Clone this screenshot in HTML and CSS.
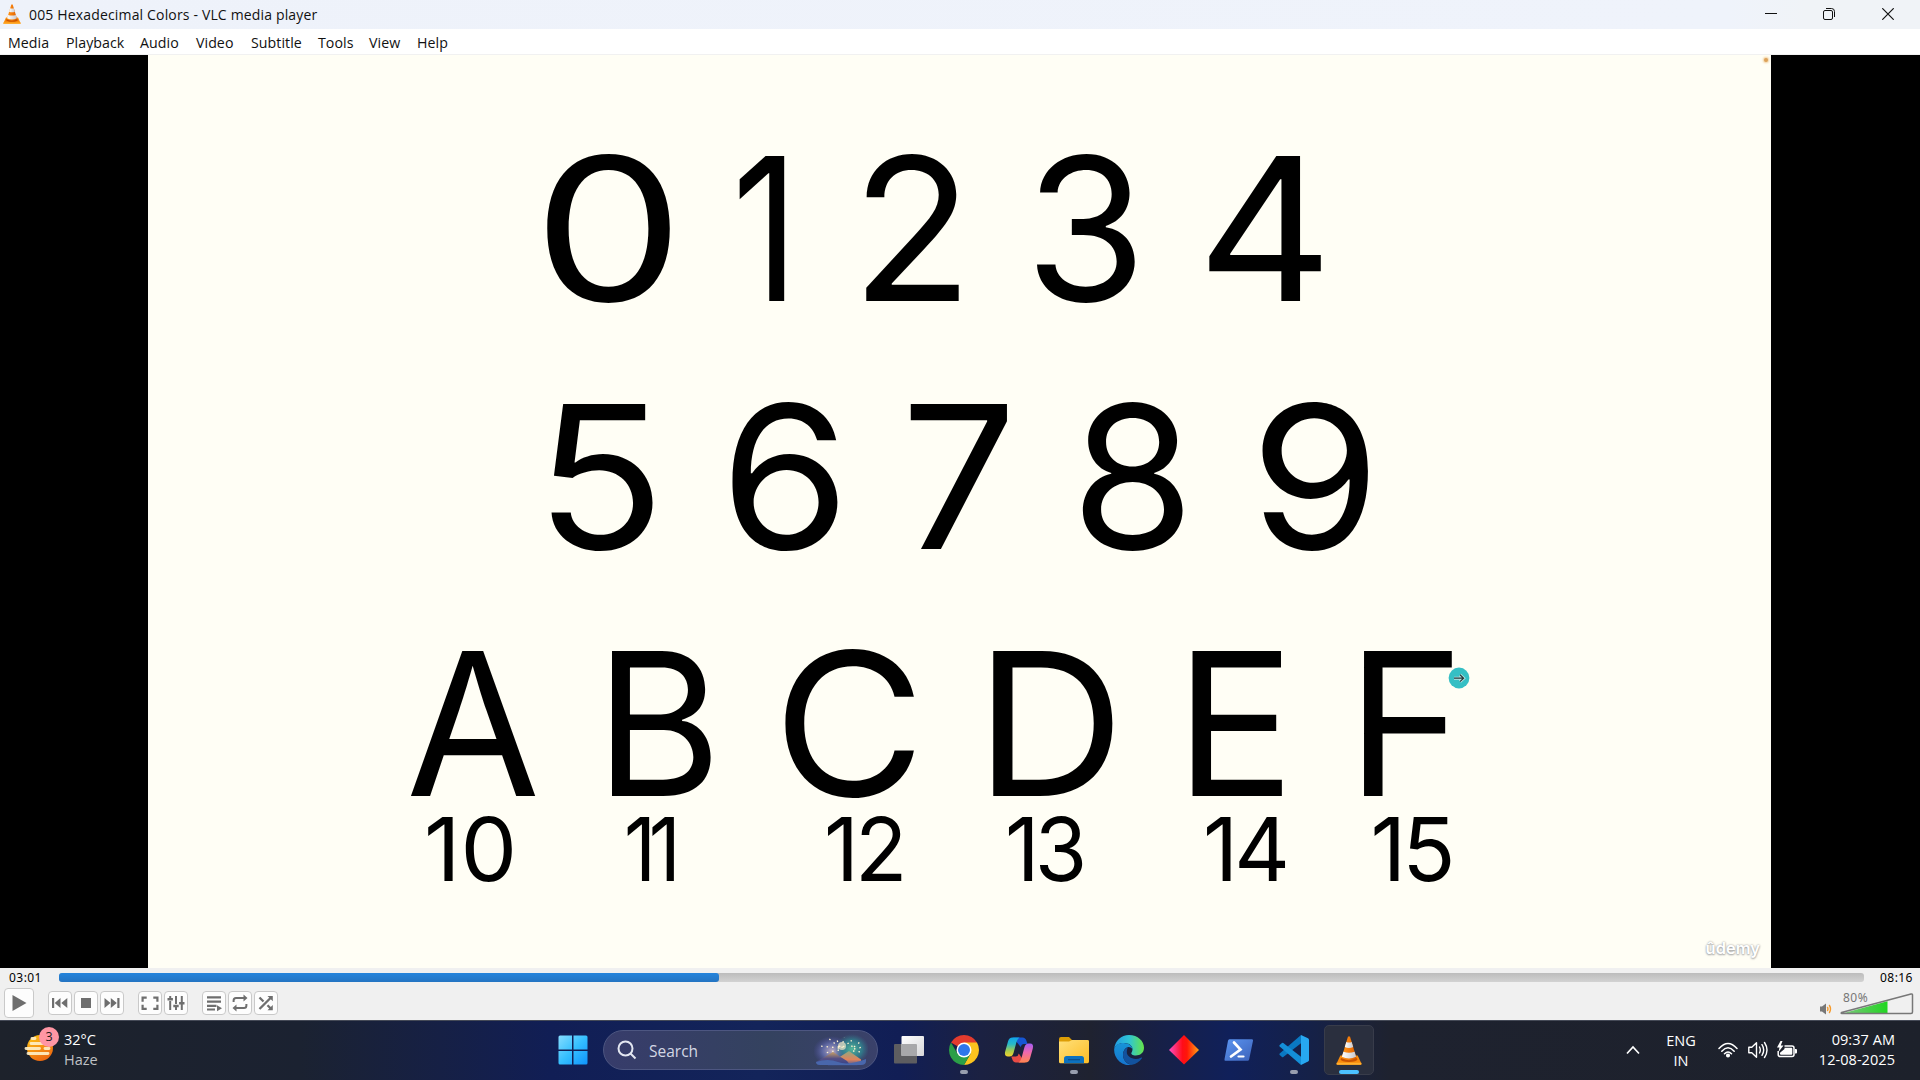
FILE: index.html
```html
<!DOCTYPE html>
<html lang="en">
<head>
<meta charset="utf-8">
<title>005 Hexadecimal Colors - VLC media player</title>
<link rel="stylesheet" href="styles.css">
</head>
<body>
<svg width="0" height="0" class="defs">
  <defs>
    <linearGradient id="cone" x1="0" x2="1" y1="0" y2="0"><stop offset="0" stop-color="#ff9a1c"/><stop offset=".5" stop-color="#f57c0a"/><stop offset="1" stop-color="#d95e00"/></linearGradient>
    <linearGradient id="white" x1="0" x2="1" y1="0" y2="0"><stop offset="0" stop-color="#fff"/><stop offset="1" stop-color="#c9c9cc"/></linearGradient>
    <symbol id="vlc" viewBox="0 0 26 29">
      <path d="M4.300 19.500h17.400l3.800 8.300q.2.900-.8.900H1.300q-1 0-.8-.9z" fill="#f98b0c"/>
      <path d="M.6 26.700h24.800v1.200q0 .8-.8.800H1.400q-.8 0-.8-.8z" fill="#ffb02e"/>
      <ellipse cx="13" cy="23.300" rx="8.500" ry="2.600" fill="#c95300"/>
      <path d="M12 .6h2l6.500 21.500q-7.500 4.200-15 0z" fill="url(#cone)"/>
      <path d="M10.300 6.100q2.700 1 5.400 0l1.500 5q-4.200 1.700-8.400 0z" fill="url(#white)"/>
      <path d="M7.400 15.800q5.600 2.100 11.200 0l1.500 5q-7.100 3.600-14.200 0z" fill="url(#white)"/>
    </symbol>
  </defs>
</svg>

<header class="titlebar">
  <svg class="app-icon" width="18" height="20"><use href="#vlc"/></svg>
  <span class="title">005 Hexadecimal Colors - VLC media player</span>
  <svg class="win-btn" width="12" height="12" viewBox="0 0 12 12"><path d="M0 5.500h12" stroke="#111"/></svg>
  <svg class="win-btn" width="12" height="12" viewBox="0 0 12 12" fill="none" stroke="#111"><rect x=".5" y="2.500" width="9" height="9" rx="1.500"/><path d="M3 .5h5.500q3 0 3 3V9" /></svg>
  <svg class="win-btn close" width="12" height="12" viewBox="0 0 12 12" stroke="#111" stroke-width="1.200"><path d="M.3.3l11.400 11.400M11.700.3L.3 11.700"/></svg>
</header>

<nav class="menubar">
  <span>Media</span><span>Playback</span><span>Audio</span><span>Video</span><span>Subtitle</span><span>Tools</span><span>View</span><span>Help</span>
</nav>

<main class="video">
  <section class="slide">
    <div class="row digits-low"><b class="g0">0</b><b class="g1">1</b><b>2</b><b class="g3">3</b><b class="g4">4</b></div>
    <div class="row digits-high"><b class="g5">5</b><b class="g6">6</b><b class="g7">7</b><b>8</b><b class="g9">9</b></div>
    <div class="row letters"><b class="ga">A</b><b class="gb">B</b><b class="gc">C</b><b class="gd">D</b><b>E</b><b>F</b></div>
    <div class="row values"><b class="v10">10</b><b class="v11">11</b><b class="v12">12</b><b class="v13">13</b><b class="v14">14</b><b class="v15">15</b></div>
    <i class="dot"></i>
    <svg class="pointer" width="22" height="22" viewBox="0 0 22 22"><circle cx="11" cy="11" r="10.400" fill="#35bfc4"/><path d="M6 11.200h9M12 7.800l3.600 3.400-3.600 3.400" fill="none" stroke="#b9e4e2" stroke-width="3"/><path d="M6 11.200h9M12 7.800l3.600 3.400-3.600 3.400" fill="none" stroke="#26383c" stroke-width="1.200"/></svg>
    <span class="watermark">ûdemy</span>
  </section>
</main>

<section class="controls">
  <div class="seek"><span class="time">03:01</span><div class="track"><div class="fill"></div></div><span class="time end">08:16</span></div>
  <div class="buttons">
    <span class="btn play"><svg width="28" height="28" viewBox="0 0 28 28"><path d="M7.500 6l14 8-14 8z"/></svg></span>
    <span class="btn"><svg viewBox="0 0 22 22"><path d="M3 6h2.200v10H3zM11.500 6v10L5.700 11zM18.300 6v10l-6-5z"/></svg></span>
    <span class="btn"><svg viewBox="0 0 22 22"><path d="M6 6h10v10H6z"/></svg></span>
    <span class="btn"><svg viewBox="0 0 22 22"><path d="M16.300 6h2.200v10h-2.200zM9.800 6v10l6-5zM3.500 6v10l6-5z"/></svg></span>
    <span class="btn split"><svg viewBox="0 0 22 22"><path d="M2.500 4.500h5.200v2.200h-3v3H2.500zM14.300 4.500h5.200v5.200h-2.200v-3h-3zM2.500 12.800h2.200v3h3V18H2.500zM17.300 12.800h2.200V18h-5.200v-2.200h3z"/></svg></span>
    <span class="btn"><svg viewBox="0 0 22 22"><path d="M4.200 9h2v9h-2zM2.500 6h5.400v2.500H2.500zM4.200 4h2v3h-2zM10 4h2v8h-2zM8.300 12.800h5.400v2.500H8.300zM10 15h2v3h-2zM15.800 4h2v6h-2zM14.100 10h5.400v2.500h-5.400zM15.800 12h2v6h-2z"/></svg></span>
    <span class="btn split"><svg viewBox="0 0 22 22"><path d="M4 4.200h14v2.200H4zM4 8.500h14v2.200H4zM4 12.800h9.500V15H4zM4 16.600h8v1.800H4zM14 13.300l5 3-5 3z"/></svg></span>
    <span class="btn"><svg viewBox="0 0 22 22"><path d="M4.600 10V8.500Q4.600 6 7 6h8.500M17.400 12v1.500q0 2.500-2.400 2.500H6.500" fill="none" stroke="#6e6e6e" stroke-width="2"/><path d="M14.500 2.500l4 3.500-4 3.500zM7.500 12.500v7l-4-3.500z"/></svg></span>
    <span class="btn"><svg viewBox="0 0 22 22"><path d="M4.500 17L15.500 6M4.500 5.500l4 4M12.500 13.200l3.500 3.600" fill="none" stroke="#6e6e6e" stroke-width="2.300"/><path d="M12.500 4h5.300v5.300zM17.800 13v5.300h-5.300z"/></svg></span>
    <div class="volume">
      <svg class="speaker" width="12" height="12" viewBox="0 0 12 12"><path d="M0 3.500h2L6 .5v11L2 8.500H0z" fill="#777"/><path d="M7.300 4q1.300 2 0 4M9.200 2q2.600 4 0 8" fill="none" stroke="#f79a2a" stroke-width="1.400"/></svg>
      <div class="wedge"><span class="pct">80%</span>
      <svg width="76" height="24" viewBox="0 0 76 24"><defs><linearGradient id="vol"><stop offset="0" stop-color="#7fc47f"/><stop offset="1" stop-color="#22d622"/></linearGradient></defs><path d="M3 21.500L48.500 9.300v12.200z" fill="url(#vol)"/><path d="M2.500 20.500L72 2q1.500-.3 1.500 1v17q0 1.500-1.500 1.500H3q-1.500-.3-.5-1z" fill="none" stroke="#777" stroke-width="1.500"/></svg></div>
    </div>
  </div>
</section>

<footer class="taskbar">
  <div class="weather">
    <div class="weather-icon">
      <svg width="32" height="30" viewBox="0 0 32 30"><defs><linearGradient id="sun" x1="0" y1="0" x2=".5" y2="1"><stop offset="0" stop-color="#ffc814"/><stop offset="1" stop-color="#ee6b10"/></linearGradient></defs><circle cx="16" cy="16" r="13" fill="url(#sun)"/><g stroke="#fff0c8" stroke-width="2.900" stroke-linecap="round"><path d="M8 6.500h3M7 11.500h18M2 16.500h13.500M21 16.500h4M4 21.500h20" opacity=".9"/></g></svg>
      <span class="badge">3</span>
    </div>
    <div class="weather-text"><span>32°C</span><span class="haze">Haze</span></div>
  </div>

  <div class="apps">
    <span class="slot"><svg width="30" height="30" viewBox="0 0 30 30"><defs><linearGradient id="win" x1="0" y1="0" x2="1" y2="1"><stop offset="0" stop-color="#86ddff"/><stop offset=".5" stop-color="#35bfff"/><stop offset="1" stop-color="#0f93fb"/></linearGradient></defs><path d="M2 .5h12v14H.5V2Q.5.5 2 .5zM15.500.5H28q1.500 0 1.500 1.500v12.500h-14zM.5 16H14v13.500H2Q.5 29.500.5 28zM15.500 16h14v12q0 1.500-1.500 1.500H15.500z" fill="url(#win)"/></svg></span>
    <div class="search">
      <svg class="lens" width="20" height="20" viewBox="0 0 20 20" fill="none" stroke="#e3e7f1" stroke-width="2"><circle cx="8.500" cy="8.500" r="7"/><path d="M13.500 13.500l5 5"/></svg>
      <span>Search</span>
      <svg class="art" width="54" height="32" viewBox="0 0 54 32">
        <defs>
          <radialGradient id="glow1"><stop offset="0" stop-color="#b9a9c0"/><stop offset=".5" stop-color="#6770ad" stop-opacity=".85"/><stop offset="1" stop-color="#4a4c9c" stop-opacity="0"/></radialGradient>
          <radialGradient id="glow2"><stop offset="0" stop-color="#54b79b"/><stop offset=".6" stop-color="#2f8590" stop-opacity=".8"/><stop offset="1" stop-color="#37718a" stop-opacity="0"/></radialGradient>
          <linearGradient id="hill" x1="0" y1="0" x2="0" y2="1"><stop offset="0" stop-color="#caa064"/><stop offset=".5" stop-color="#555084"/><stop offset="1" stop-color="#33408a"/></linearGradient>
          <linearGradient id="hill2" x1="0" y1="0" x2="0" y2="1"><stop offset="0" stop-color="#90a982"/><stop offset=".6" stop-color="#e0835a"/><stop offset="1" stop-color="#3e559d"/></linearGradient>
        </defs>
        <ellipse cx="18" cy="17" rx="19" ry="15" fill="url(#glow1)"/><ellipse cx="38" cy="15" rx="17" ry="15" fill="url(#glow2)"/>
        <path d="M20 30L41 14l12 10v5l-4 2H20z" transform="translate(-6 5) scale(1 .85)" fill="url(#hill2)"/><path d="M2 28L19 18l14 9 3 4H4z" fill="url(#hill)"/>
        <path d="M2 28q12-4 22 0t28-3v2q0 4-5 4H6q-4 0-4-3z" fill="#4967ac"/>
        <g stroke="#fff3d1" stroke-width="1.300" stroke-dasharray="1.500 4"><path d="M25 13L14 4M25 14L6 12M26 13L22 4M28 14L30 3M38 13l-1-8M40 13l7-6M40 15l9-2M39 17l8 1M25 16l-14 3M29 13l7-5"/></g>
        <circle cx="28" cy="12" r="4" fill="#fff0cc" opacity=".65"/>
      </svg>
    </div>
    <span class="slot"><svg width="30" height="30" viewBox="0 0 30 30"><defs><linearGradient id="tv" x1="0" y1="0" x2="1" y2="1"><stop offset="0" stop-color="#fff"/><stop offset="1" stop-color="#d7d7d9"/></linearGradient></defs><rect x="0" y="9" width="23" height="19.500" rx="1" fill="#5d5d60"/><rect x="7.500" y="1" width="22.500" height="20" rx="1" fill="url(#tv)"/><path d="M7.500 9H22q1 0 1 1v11H7.500z" fill="#a8a8aa"/></svg></span>
    <span class="slot running"><svg width="30" height="30" viewBox="0 0 30 30"><path d="M15 15L2.010 7.500A15 15 0 0 1 27.990 7.500z" fill="#e33b2e"/><path d="M15 7.500h12.990A15 15 0 0 1 15 30l6.500-11.250z" fill="#fcc31e"/><path d="M2.010 7.500A15 15 0 0 0 15 30l6.500-11.250H8.500z" fill="#2b9f47"/><circle cx="15" cy="15" r="7.500" fill="#fff"/><circle cx="15" cy="15" r="6" fill="#2f76ea"/></svg></span>
    <span class="slot"><svg width="30" height="30" viewBox="0 0 30 30"><defs><linearGradient id="cp1" x1="0" y1="0" x2="0" y2="1"><stop offset="0" stop-color="#12a6e8"/><stop offset=".35" stop-color="#28b9c8"/><stop offset=".7" stop-color="#a6cc4c"/><stop offset="1" stop-color="#f5d22b"/></linearGradient><linearGradient id="cp2" x1="0" y1="0" x2="0" y2="1"><stop offset="0" stop-color="#a35cf5"/><stop offset=".45" stop-color="#ed67b0"/><stop offset="1" stop-color="#ff8650"/></linearGradient></defs><path d="M9 2.500h9.500q3 0 4 3.500l1 3h-4q-2 0-2.800 3z" fill="#1656d4"/><path d="M21 27.500h-9q-3 0-4-4l-.8-2H12q2 0 2.800-3z" fill="#e84b45"/><path d="M8.500 2.500h7q-2 1-3 4.500L9.500 18q-1 3.500-4 3.500H4q-4 0-2.800-5L4 6.500q1-4 4.500-4z" fill="url(#cp1)"/><path d="M21.500 27.500h-7q2-1 3-4.500L20.500 12q1-3.500 4-3.500H26q4 0 2.800 5L26 23.500q-1 4-4.500 4z" fill="url(#cp2)"/></svg></span>
    <span class="slot running"><svg width="30" height="30" viewBox="0 0 30 30"><defs><linearGradient id="fd" x1="0" y1="0" x2="1" y2="1"><stop offset="0" stop-color="#ffe07a"/><stop offset="1" stop-color="#fdbd25"/></linearGradient></defs><path d="M0 4q0-2 2-2h8l3 3h15.500q1.500 0 1.500 1.500V12H0z" fill="#dd9d06"/><path d="M0 6.500h10l3-1.500h15.500q1.500 0 1.500 1.500v20q0 1.800-1.500 1.800h-27Q0 28.300 0 26.800z" fill="url(#fd)"/><path d="M5 28.300v-4.800q0-2.500 2.500-2.500h15q2.500 0 2.500 2.500v4.800z" fill="#0c71bf"/><path d="M9 24.700h12" stroke="#0b4d8b" stroke-width="1.200"/></svg></span>
    <span class="slot"><svg width="30" height="30" viewBox="0 0 30 30"><defs><linearGradient id="e1"><stop offset="0" stop-color="#229ce4"/><stop offset=".5" stop-color="#2fc4d5"/><stop offset="1" stop-color="#66e548"/></linearGradient><linearGradient id="e2" x1="0" y1="0" x2="0" y2="1"><stop offset="0" stop-color="#1794d8"/><stop offset="1" stop-color="#1674ce"/></linearGradient></defs><path d="M.2 14A15 15 0 0 1 15 0C24 0 30 6.200 30 12.800 30 18 26 20.500 21.800 20.500c-3.500 0-4.500-1.300-4.500-2.200 0-.8 1.200-1.500 1.200-4C18.500 10 14 8 10 8 5 8 .7 10.500.2 14z" fill="url(#e1)"/><path d="M.2 14C.8 10 5 8 9.500 8c5 0 9 3 9 6.300-1-1.500-2.200-2.300-4-2.300-3 0-5.500 4-5.500 8 0 5 4 9.800 9.500 9.700A15 15 0 0 1 .2 14z" fill="url(#e2)"/><path d="M14 12.200c-3 1-5 4.300-5 7.800 0 5 4 9.500 9 9.700 4-.6 7.500-2.900 9.800-6.200.5-.8-.2-1.300-1-.8-1.500.8-3.300 1.200-5 1.200-5 0-9-3-9-6.800 0-2 .6-3.800 1.200-4.900z" fill="#12529e"/></svg></span>
    <span class="slot"><svg width="30" height="30" viewBox="0 0 30 30"><defs><linearGradient id="dm"><stop offset="0" stop-color="#ff4fc5"/><stop offset=".45" stop-color="#ff0d19"/><stop offset=".6" stop-color="#ff1708"/><stop offset="1" stop-color="#ffa316"/></linearGradient></defs><path d="M15 0l15 15-15 14.500L0 15z" fill="url(#dm)"/></svg></span>
    <span class="slot"><svg width="30" height="30" viewBox="0 0 30 30"><defs><linearGradient id="ps" x1="0" y1="0" x2="1" y2="1"><stop offset="0" stop-color="#5b95f1"/><stop offset="1" stop-color="#3b61b9"/></linearGradient></defs><path d="M5.500 4.300H28q1.400 0 1 1.500l-3.800 18.500q-.3 1.500-1.600 1.500H1.500q-1.300 0-1-1.500L4 5.800q.3-1.500 1.500-1.500z" fill="url(#ps)"/><path d="M10 7.500l6.500 7-9.500 7" fill="none" stroke="#fff" stroke-width="2.700" stroke-linecap="round"/><path d="M14.500 21.500h5" stroke="#fff" stroke-width="2.200" stroke-linecap="round"/></svg></span>
    <span class="slot running"><svg width="30" height="30" viewBox="0 0 30 30"><path d="M22 0l7 3.300q1 .5 1 1.600V25q0 1.100-1 1.600l-7 3.400z" fill="#27a8f2"/><path d="M22 0v8.200L4.300 22q-.7.500-1.300 0l-2.300-2q-.7-.8 0-1.500z" fill="#0a78c2"/><path d="M22 30v-8.200L4.300 8Q3.600 7.500 3 8L.7 10q-.7.800 0 1.500z" fill="#148fd8"/></svg></span>
    <span class="slot active"><svg width="26" height="29"><use href="#vlc"/></svg></span>
  </div>

  <div class="tray">
    <svg class="chevron" width="14" height="10" viewBox="0 0 14 10" fill="none" stroke="#fff" stroke-width="1.700"><path d="M1 8.500l6-6.500 6 6.500"/></svg>
    <div class="lang"><span>ENG</span><span>IN</span></div>
    <svg class="wifi" width="20" height="16" viewBox="0 0 20 16" fill="none" stroke="#fff" stroke-width="1.500" stroke-linecap="round"><path d="M1 6.500q9-10 18 0M3.800 9.200q6.200-6.700 12.400 0M6.500 11.700q3.500-3.600 7 0"/><circle cx="10" cy="13.500" r="1.300" fill="#fff"/></svg>
    <svg class="sound" width="20" height="18" viewBox="0 0 20 18" fill="none" stroke="#fff" stroke-width="1.400" stroke-linejoin="round" stroke-linecap="round"><path d="M.8 6.300h3l4.700-4.500v14.400L3.800 11.700h-3zM11.500 6q1.600 3 0 6M14 3.700q3.400 5.300 0 10.600M16.500 1.500q5 7.500 0 15"/></svg>
    <svg class="battery" width="21" height="18" viewBox="0 0 21 18"><path d="M7.500 5H15q2 0 2 2v6.500q0 2-2 2H3.200q-2 0-2-2V10" fill="none" stroke="#fff" stroke-width="1.500"/><path d="M18 8h1q1 0 1 1v2.500q0 1-1 1h-1z" fill="#fff"/><path d="M7.500 6.700h6.800q1 0 1 1v5q0 1-1 1H4q-1 0-1-1v-1L7.500 8z" fill="#fff"/><path d="M3.500 0L0 6.500h2.500L1.500 11 6.500 4.500H3.800L5.500 0z" fill="#fff"/></svg>
    <div class="clock"><span>09:37 AM</span><span class="date">12-08-2025</span></div>
  </div>
</footer>
</body>
</html>
```
FILE: styles.css
```css
* { box-sizing: border-box; }
body {
  margin: 0;
  width: 1920px;
  height: 1080px;
  overflow: hidden;
  display: flex;
  flex-direction: column;
  font-family: "Open Sans", "Noto Sans", sans-serif;
  color: #111;
}
.defs { position: absolute; }
svg { display: block; flex: none; }

/* Window chrome */
.titlebar {
  height: 29px;
  display: flex;
  align-items: center;
  padding: 0 26px 1px 3px;
  background: linear-gradient(90deg, #eef2fa 0, #eff3fb 90%, #f0f3f7 94%);
}
.title { flex: 1; margin: 2px 0 0 8px; font-size: 14px; line-height: 26px; letter-spacing: .16px; white-space: nowrap; }
.win-btn { margin-left: 46px; }
.win-btn.close { margin-left: 47px; }
.menubar {
  height: 26px;
  display: grid;
  grid-template-columns: 58px 74px 56px 55px 67px 51px 48px 60px;
  padding-left: 8px;
  background: #fff;
  border-bottom: 1px solid #f1f1f1;
  font-size: 14.200px;
  line-height: 27px;
  letter-spacing: .05px;
}

/* Video frame */
.video { height: 913px; padding: 0 149px 0 148px; background: #000; }
.slide { position: relative; height: 100%; background: #fffef5; color: #000; padding-top: 50px; }
.row { display: grid; height: 248px; font-family: Inter, sans-serif; font-size: 199.500px; line-height: 248px; }
.row b { font-weight: 400; white-space: nowrap; transform: scaleX(var(--sx, 1)); transform-origin: 0 0; }
.digits-low { padding-left: 385.400px; grid-template-columns: 198.600px 119.200px 174.100px 172.100px 112px; }
.digits-high { padding-left: 387.400px; grid-template-columns: 184.200px 181.800px 169.600px 179.500px 120px; height: 247px; }
.letters { padding-left: 258px; grid-template-columns: 189.200px 177.500px 202.600px 199.600px 171.500px 100px; }
.values { padding-left: 275.500px; height: 110px; margin-top: -54px; font-size: 87.600px; line-height: 110px; grid-template-columns: 200.500px 200px 180.500px 198px 168px 100px; }
.g0 { --sx: 1.2; }
.g1 { --sx: .82; }
.g3 { --sx: .985; }
.g4 { --sx: 1.055; }
.g5 { --sx: 1.074; }
.g6 { --sx: 1.05; }
.g7 { --sx: 1.025; }
.g9 { --sx: 1.055; }
.ga { --sx: .975; }
.gb { --sx: .97; }
.gc { --sx: 1.045; }
.gd { --sx: 1.04; }
.v10 { --sx: 1.025; }
.v11 { --sx: .9; letter-spacing: -8px; }
.v12 { --sx: .98; letter-spacing: -4px; }
.v13 { --sx: .97; letter-spacing: -5px; }
.v14 { --sx: .985; letter-spacing: -4px; }
.v15 { --sx: 1; letter-spacing: -4px; }
.dot { position: absolute; right: 3px; top: 3px; width: 4px; height: 4px; border-radius: 50%; background: #dca159; box-shadow: 0 0 2px 1px #f2cf9c; }
.pointer { position: absolute; left: 1300px; top: 612px; }
.watermark { position: absolute; right: 11px; bottom: 9px; font: 600 16.500px/22px Inter, sans-serif; color: #fff; text-shadow: 0 0 2px #999, 0 1px 2px #aaa; }

/* Player controls */
.controls { height: 52px; background: #f0f0f0; }
.seek { height: 18px; display: flex; align-items: center; padding: 0 7px 0 9px; }
.time { width: 50px; font: 12px/16px "Noto Sans", sans-serif; letter-spacing: .45px; color: #000; padding-top: 1px; }
.time.end { width: 33px; margin-left: 16px; white-space: nowrap; }
.track { width: 1805px; height: 9px; border-radius: 3px; background: linear-gradient(#bcbcbc, #d2d2d2); }
.fill { width: 660px; height: 100%; border-radius: 3px; background: linear-gradient(#2484dc, #2474c2); }
.buttons { display: flex; align-items: center; gap: 2px; height: 34px; padding: 0 4px; }
.btn { display: grid; place-items: center; width: 24px; height: 24px; border: 1px solid #c9c9c9; border-radius: 4px; background: #fdfdfd; fill: #6e6e6e; }
.btn svg { width: 22px; height: 22px; }
.btn.play { width: 30px; height: 30px; margin-right: 12px; }
.btn.play svg { width: 28px; height: 28px; }
.btn.split { margin-left: 12px; }
.volume { display: flex; align-items: flex-end; margin-left: auto; height: 28px; gap: 7px; }
.speaker { margin-bottom: 2px; }
.wedge { position: relative; padding: 1px 0 1px; margin-right: 1px; }
.pct { position: absolute; left: 4px; top: -1px; font: 12px/16px "Noto Sans", sans-serif; letter-spacing: .5px; color: #777; }

/* Taskbar */
.taskbar {
  height: 60px;
  display: grid;
  grid-template-columns: 545px 832px 1fr;
  border-top: 1px solid #454a57;
  background: linear-gradient(90deg, #1d222b 0, #1b2231 300px, #162045 440px, #111e55 550px, #13245a 760px, #111e55 900px, #1b2142 980px, #1f2230 1090px, #172047 1160px, #10205a 1230px, #152148 1310px, #1e222f 1390px, #1d212b 100%);
  color: #fff;
  font-size: 14.500px;
  line-height: 20px;
}
.weather { display: flex; padding-left: 24px; gap: 8px; }
.weather-icon { position: relative; width: 32px; padding-top: 11px; }
.badge { position: absolute; left: 15px; top: 6px; width: 20px; height: 20px; border-radius: 50%; background: #ff96a4; color: #1b1b1b; font-size: 12.500px; text-align: center; }
.weather-text { display: flex; flex-direction: column; padding-top: 9px; }
.haze { color: #bfc1c5; }
.apps { display: flex; align-items: center; padding-bottom: 1px; }
.slot { position: relative; display: grid; place-items: center; width: 55px; height: 50px; }
.running::after { content: ""; position: absolute; bottom: 1px; left: 23.500px; width: 8px; height: 4px; border-radius: 2px; background: #989eae; }
.active { width: 50px; margin-left: 3px; border: 1px solid #383c4a; border-radius: 5px; background: #2a2f3e; }
.active::after { content: ""; position: absolute; bottom: 0; left: 14px; width: 20px; height: 4px; border-radius: 2px; background: #4cc2ff; }
.search { display: flex; align-items: center; width: 275px; height: 40px; margin: 0 3px; padding: 0 9px 0 13px; border: 1px solid #4d5681; border-radius: 20px; background: linear-gradient(90deg, #373c6b, #34425f 60%, #3a416a); }
.search span { flex: 1; margin: 1px 0 0 12px; font-size: 15.500px; color: #d3d7e4; }
.tray { display: flex; align-items: center; padding: 0 25px 1px 0; }
.chevron { margin-left: 249px; }
.lang { display: flex; flex-direction: column; align-items: center; width: 40px; margin: 2px 0 0 21px; }
.wifi { margin-left: 17px; }
.sound { margin-left: 10px; }
.battery { margin-left: 9px; }
.clock { display: flex; flex-direction: column; align-items: flex-end; margin-left: auto; white-space: nowrap; letter-spacing: .05px; }
```
